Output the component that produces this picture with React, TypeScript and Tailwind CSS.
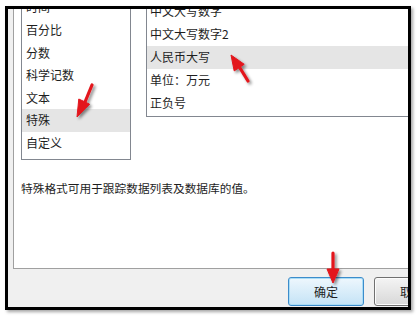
const leftItems = ["时间", "百分比", "分数", "科学记数", "文本", "特殊", "自定义"];
const rightItems = ["中文大写数字", "中文大写数字2", "人民币大写", "单位：万元", "正负号"];

function Arrows() {
  return (
    <svg
      className="pointer-events-none absolute left-0 top-0"
      width="418"
      height="318"
      viewBox="0 0 418 318"
    >
      <defs>
        <filter id="sh" x="-50%" y="-50%" width="200%" height="200%">
          <feDropShadow dx="2" dy="2" stdDeviation="1.6" floodColor="#000" floodOpacity="0.45" />
        </filter>
      </defs>
      <g fill="#e3141c" stroke="#e3141c" filter="url(#sh)">
        {/* left list */}
        <line x1="92" y1="85" x2="85" y2="102" strokeWidth="3.2" strokeLinecap="round" />
        <polygon points="77,117 89.6,104.2 78.8,99" strokeWidth="1" strokeLinejoin="round" />
        {/* right list */}
        <line x1="248" y1="81" x2="240" y2="68" strokeWidth="3.2" strokeLinecap="round" />
        <polygon points="231,55 244.2,64.3 234.2,70.9" strokeWidth="1" strokeLinejoin="round" />
        {/* ok button */}
        <line x1="333" y1="253" x2="333" y2="270" strokeWidth="3.2" strokeLinecap="round" />
        <polygon points="333,283 327,269 339,269" strokeWidth="1" strokeLinejoin="round" />
      </g>
    </svg>
  );
}

export default function App() {
  return (
    <div className="relative h-[318px] w-[418px] overflow-hidden bg-white font-['Noto_Sans_CJK_SC',sans-serif] text-[12px] text-[#1e1e1e]">
      <div className="ml-[5px] mt-[6px] flex h-[304px] w-[406px] flex-col overflow-hidden border-[3px] border-black bg-[#f0f0f0] shadow-[2px_2px_3px_rgba(0,0,0,0.35)]">
        <div className="ml-[5px] flex h-[260px] w-[420px] shrink-0 flex-col border-b border-l border-[#a0a0a0] bg-white">
          <div className="flex h-[151px] shrink-0 items-start">
            <div className="ml-[7px] h-[151px] w-[110px] shrink-0 overflow-hidden border-x border-b border-[#828790]">
              <div className="mt-[-12.9px]">
                {leftItems.map((t) => (
                  <div
                    key={t}
                    className={
                      "flex h-[22.6px] items-center pl-[4px] leading-none " +
                      (t === "特殊" ? "bg-[#e5e5e5]" : "")
                    }
                  >
                    {t}
                  </div>
                ))}
              </div>
            </div>
            <div className="ml-[15px] h-[108px] flex-1 overflow-hidden border-b border-l border-[#828790]">
              <div className="mt-[-9.5px]">
                {rightItems.map((t) => (
                  <div
                    key={t}
                    className={
                      "flex h-[23px] items-center pl-[3px] leading-none " +
                      (t === "人民币大写" ? "bg-[#e5e5e5]" : "")
                    }
                  >
                    {t}
                  </div>
                ))}
              </div>
            </div>
          </div>
          <p className="mt-[20px] pl-[7px] text-[11.7px] leading-[16px]">
            特殊格式可用于跟踪数据列表及数据库的值。
          </p>
        </div>
        <div className="ml-[280px] mt-[8px] flex gap-[10px]">
          <button className="flex h-[29px] w-[76px] shrink-0 items-center justify-center rounded-[3px] border border-[#3c8ccb] bg-gradient-to-b from-[#eef7fd] to-[#c4e3f6] leading-none shadow-[inset_0_0_0_1px_#a9dcf6]">
            确定
          </button>
          <button className="flex h-[29px] w-[76px] shrink-0 items-center justify-center rounded-[3px] border border-[#707070] bg-gradient-to-b from-[#f4f4f4] to-[#d8d8d8] leading-none shadow-[inset_0_0_0_1px_#fcfcfc]">
            取消
          </button>
        </div>
      </div>
      <Arrows />
    </div>
  );
}
